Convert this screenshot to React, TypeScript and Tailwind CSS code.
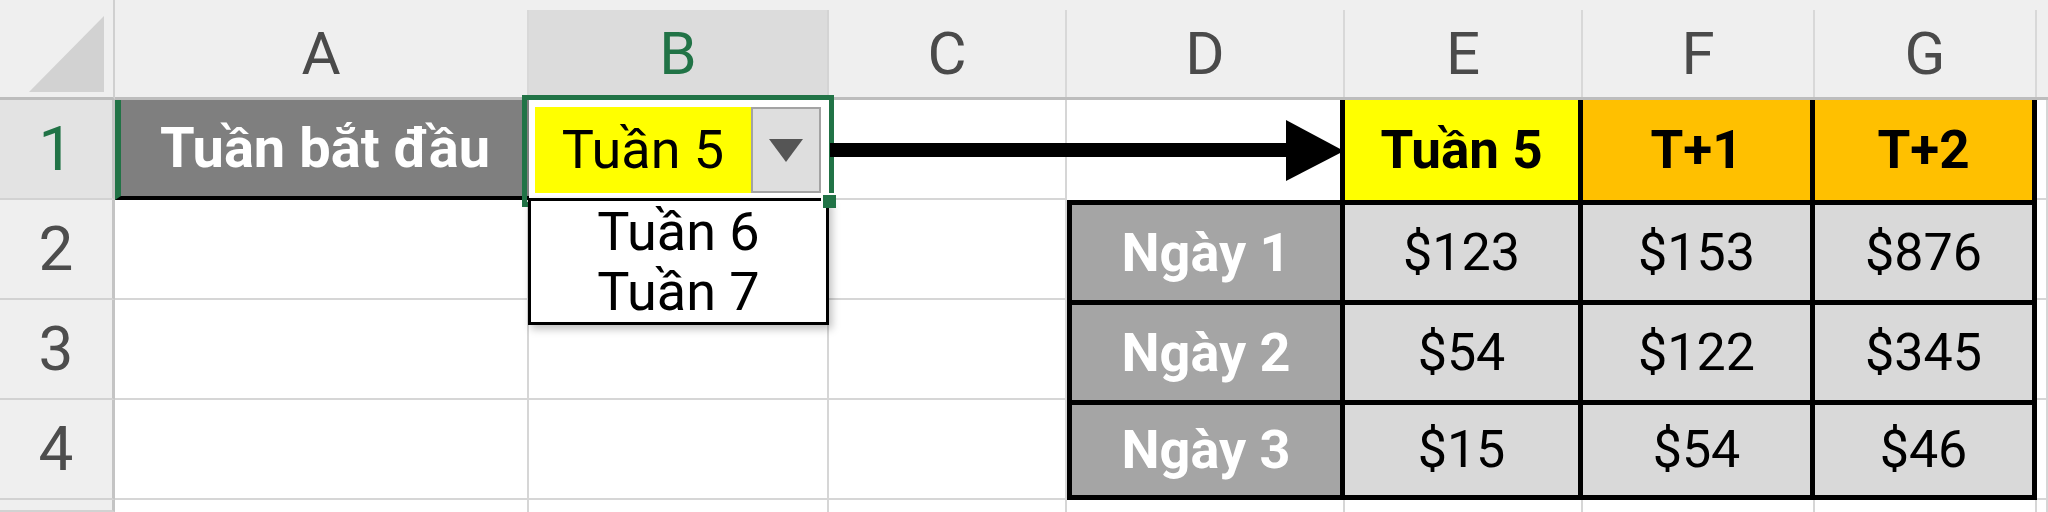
const cols = ["A", "B", "C", "D", "E", "F", "G"];

const plain = "bg-white border-r-2 border-b-2 border-r-[#d6d6d6] border-b-[#d6d6d6]";

const values = [
  { label: "Ngày 1", nums: ["$123", "$153", "$876"] },
  { label: "Ngày 2", nums: ["$54", "$122", "$345"] },
  { label: "Ngày 3", nums: ["$15", "$54", "$46"] },
];

function ColHead({ label, active }: { label: string; active?: boolean }) {
  return (
    <div className="bg-[#efefef] border-b-[3px] border-b-[#bdbdbd] pt-[10px]">
      <div
        className={
          active
            ? "h-full flex items-center justify-center border-r-2 border-r-[#d4d4d4] bg-[#dcdcdc] text-[#217346] text-[60px] leading-none"
            : "h-full flex items-center justify-center border-r-2 border-r-[#d8d8d8] text-[#4a4a4a] text-[60px] leading-none"
        }
      >
        {label}
      </div>
    </div>
  );
}

function RowHead({ n, active }: { n?: number; active?: boolean }) {
  return (
    <div
      className={
        active
          ? "flex items-center justify-center border-r-[3px] border-r-[#c4c4c4] border-b-2 border-b-[#d2d2d2] bg-[#e3e3e3] text-[#217346] text-[62px] leading-none"
          : "flex items-center justify-center border-r-[3px] border-r-[#c4c4c4] border-b-2 border-b-[#d2d2d2] bg-[#efefef] text-[#4d4d4d] text-[62px] leading-none"
      }
    >
      {n}
    </div>
  );
}

function Dropdown() {
  return (
    <div className="absolute left-[-1px] top-[98px] w-[301px] h-[127px] z-20 bg-white border-[3px] border-black shadow-[3px_4px_8px_rgba(0,0,0,0.25)] flex flex-col pt-[1px]">
      <div className="h-[60px] flex items-center justify-center text-[54px] leading-none text-black">Tuần 6</div>
      <div className="h-[60px] flex items-center justify-center text-[54px] leading-none text-black">Tuần 7</div>
    </div>
  );
}

export default function App() {
  return (
    <div className="w-[2048px] h-[512px] overflow-hidden bg-white font-['Roboto',sans-serif]">
      <div className="grid grid-cols-[115px_414px_300px_238px_278px_238px_232px_222px_11px] grid-rows-[100px_100px_100px_100px_100px_12px]">
        {/* header row */}
        <div className="relative bg-[#efefef] border-r-2 border-r-[#d0d0d0] border-b-[3px] border-b-[#bdbdbd]">
          <svg className="absolute left-0 top-0" width="115" height="100">
            <polygon points="29,92 104,16 104,92" fill="#d2d2d2" />
          </svg>
        </div>
        {cols.map((c) => (
          <ColHead key={c} label={c} active={c === "B"} />
        ))}
        <div className="bg-[#efefef] border-b-[3px] border-b-[#bdbdbd]" />

        {/* row 1 */}
        <RowHead n={1} active />
        <div className="bg-[#7f7f7f] border-l-[6px] border-l-[#217346] border-b-4 border-b-black flex items-center justify-center text-white font-bold text-[56px] leading-none">
          Tuần bắt đầu
        </div>
        <div className="relative z-10 bg-white pl-[6px] pr-[8px] py-[7px] flex">
          <div className="flex-1 bg-[#ffff00] flex items-center justify-center text-[54px] leading-none text-black">
            Tuần 5
          </div>
          <div className="w-[70px] bg-[#dedede] border-2 border-[#a3a3a3] flex items-center justify-center">
            <svg width="34" height="23" viewBox="0 0 34 23">
              <polygon points="0,0 34,0 17,23" fill="#555555" />
            </svg>
          </div>
          <div className="absolute left-[-7px] top-[-5px] right-[-5px] bottom-[-7px] border-[5px] border-[#217346]" />
          <Dropdown />
          <div className="absolute right-[-7px] bottom-[-8px] w-[15px] h-[15px] z-30 bg-[#217346] border-l-2 border-t-2 border-white" />
        </div>
        <div className={`relative ${plain}`}>
          <svg className="absolute left-[1px] top-[20px] z-10 overflow-visible" width="514" height="62" viewBox="0 0 514 62">
            <rect x="0" y="23" width="460" height="14" fill="#000" />
            <polygon points="456,0 514,31 456,61" fill="#000" />
          </svg>
        </div>
        <div className="bg-white border-r-[5px] border-r-black" />
        <div className="bg-[#ffff00] border-r-[5px] border-black flex items-center justify-center font-bold text-[53px] leading-none text-black">
          Tuần 5
        </div>
        <div className="bg-[#ffc000] border-r-[5px] border-black flex items-center justify-center font-bold text-[53px] leading-none text-black">
          T+1
        </div>
        <div className="bg-[#ffc000] border-r-[5px] border-black flex items-center justify-center font-bold text-[53px] leading-none text-black">
          T+2
        </div>
        <div className={plain} />

        {/* rows 2-4 */}
        {values.map((row, i) => (
          <div key={row.label} className="contents">
            <RowHead n={i + 2} />
            <div className={plain} />
            <div className={plain} />
            <div className={plain} />
            <div
              className={
                i === 2
                  ? "bg-[#a5a5a5] border-[5px] border-black flex items-center justify-center text-white font-bold text-[54px] leading-none"
                  : "bg-[#a5a5a5] border-l-[5px] border-r-[5px] border-t-[5px] border-black flex items-center justify-center text-white font-bold text-[54px] leading-none"
              }
            >
              {row.label}
            </div>
            {row.nums.map((v, j) => (
              <div
                key={j}
                className={
                  i === 2
                    ? "bg-[#d9d9d9] border-r-[5px] border-t-[5px] border-b-[5px] border-black flex items-center justify-center text-black text-[52px] leading-none"
                    : "bg-[#d9d9d9] border-r-[5px] border-t-[5px] border-black flex items-center justify-center text-black text-[52px] leading-none"
                }
              >
                {v}
              </div>
            ))}
            <div className={plain} />
          </div>
        ))}

        {/* row 5, cut off */}
        <RowHead />
        {["a", "b", "c", "d", "e", "f", "g", "h"].map((k) => (
          <div key={k} className="bg-white border-r-2 border-r-[#d6d6d6]" />
        ))}
      </div>
    </div>
  );
}
